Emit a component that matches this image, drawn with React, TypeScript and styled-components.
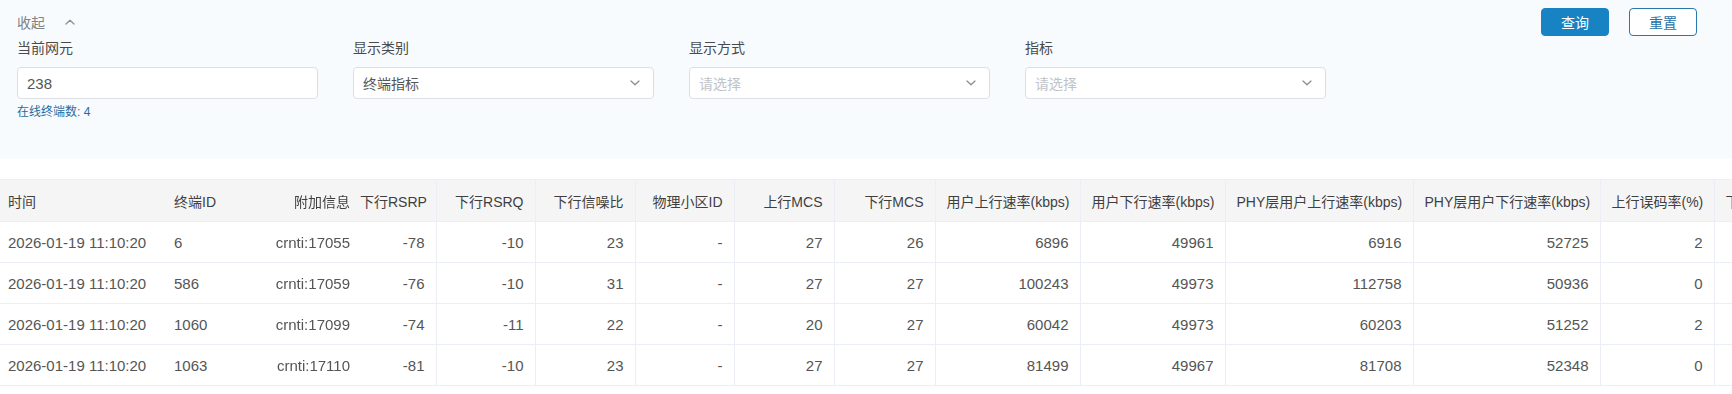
import React from "react";
import styled, { createGlobalStyle } from "styled-components";

const GlobalStyle = createGlobalStyle`
  html, body { margin: 0; padding: 0; background: #ffffff; }
  body {
    font-family: "Liberation Sans", Arial, "Noto Sans CJK SC", sans-serif;
    font-size: 14px;
    color: #555;
  }
  * { box-sizing: border-box; }
`;

const Page = styled.div`
  width: 1732px;
  height: 394px;
  overflow: hidden;
  background: #fff;
`;

const FilterPanel = styled.section`
  height: 159px;
  background: #f7fbfe;
  padding: 8px 35px 0 17px;
  display: flex;
  flex-direction: column;
`;

const TopBar = styled.div`
  height: 28px;
  display: flex;
  align-items: center;
  justify-content: space-between;
`;

const Toggle = styled.div`
  display: flex;
  align-items: center;
  gap: 20px;
  color: #828282;
  font-size: 14px;
`;

const Buttons = styled.div`
  display: flex;
  gap: 20px;
`;

const Button = styled.button<{ $primary?: boolean }>`
  width: 68px;
  height: 28px;
  border-radius: 4px;
  font-family: inherit;
  font-size: 14px;
  border: 1px solid ${(p) => (p.$primary ? "#1783c3" : "#2a78ab")};
  background: ${(p) => (p.$primary ? "#1783c3" : "#ffffff")};
  color: ${(p) => (p.$primary ? "#ffffff" : "#2a72a6")};
  padding: 0;
`;

const Fields = styled.div`
  margin-top: 2px;
  display: flex;
  gap: 35px;
`;

const Field = styled.div`
  width: 301px;
  display: flex;
  flex-direction: column;
`;

const Label = styled.div`
  line-height: 20px;
  color: #4a4a4a;
  margin-bottom: 9px;
`;

const Box = styled.div<{ $placeholder?: boolean; $latin?: boolean }>`
  height: 32px;
  border: 1px solid #dcdfe6;
  border-radius: 4px;
  background: #fff;
  padding: 0 13px 0 9px;
  display: flex;
  align-items: center;
  justify-content: space-between;
  font-size: ${(p) => (p.$latin ? "15px" : "14px")};
  color: ${(p) => (p.$placeholder ? "#bfc3c9" : "#555")};
`;

const Hint = styled.div`
  margin-top: 5px;
  line-height: 16px;
  font-size: 12px;
  color: #2a6b9c;
`;

const TableWrap = styled.div`
  margin-top: 20px;
  width: 1732px;
  overflow: hidden;
`;

const Table = styled.table`
  border-collapse: collapse;
  table-layout: fixed;
  width: 1828px;
`;

type CellProps = { $align: string; $frozen?: boolean; $edge?: boolean; $left?: number; $tight?: boolean };

const HeadCell = styled.th<CellProps>`
  height: 42px;
  padding: 0 ${(p) => (p.$tight ? "9px" : "11px")} 0
    ${(p) => (p.$frozen ? "8px" : p.$tight ? "0" : "11px")};
  background: #f5f5f5;
  color: #3f3f3f;
  font-weight: normal;
  font-size: 14px;
  text-align: ${(p) => p.$align};
  white-space: nowrap;
  overflow: hidden;
  border-top: 1px solid #ebeef5;
  border-bottom: 1px solid #ebeef5;
  border-right: ${(p) => (p.$frozen ? "none" : "1px solid #ebeef5")};
  ${(p) => (p.$frozen ? `position: sticky; left: ${p.$left}px; z-index: 2;` : "")}
  ${(p) => (p.$edge ? "box-shadow: 3px 0 5px -2px rgba(0,0,0,0.08); padding-right: 10px;" : "")}
`;

const Cell = styled.td<CellProps>`
  height: 41px;
  padding: 0 11px 0 ${(p) => (p.$frozen ? "8px" : "11px")};
  background: #fff;
  color: #555;
  font-size: 15px;
  text-align: ${(p) => p.$align};
  white-space: nowrap;
  overflow: hidden;
  border-bottom: 1px solid #ebeef5;
  border-right: ${(p) => (p.$frozen ? "none" : "1px solid #ebeef5")};
  ${(p) => (p.$frozen ? `position: sticky; left: ${p.$left}px; z-index: 2;` : "")}
  ${(p) => (p.$edge ? "box-shadow: 3px 0 5px -2px rgba(0,0,0,0.08); padding-right: 10px;" : "")}
`;

const ChevronUp = () => (
  <svg width="10" height="6" viewBox="0 0 10 6" fill="none">
    <polyline points="1,5 5,1.2 9,5" stroke="#8c8c8c" strokeWidth="1.2" strokeLinecap="round" strokeLinejoin="round" />
  </svg>
);

const ChevronDown = () => (
  <svg width="10" height="6" viewBox="0 0 10 6" fill="none">
    <polyline points="1,1 5,4.8 9,1" stroke="#8a8a8a" strokeWidth="1.2" strokeLinecap="round" strokeLinejoin="round" />
  </svg>
);

type Col = {
  title: string;
  width: number;
  align: "left" | "right";
  frozen?: boolean;
  left?: number;
  edge?: boolean;
  tight?: boolean;
};

const columns: Col[] = [
  { title: "时间", width: 166, align: "left", frozen: true, left: 0 },
  { title: "终端ID", width: 97, align: "left", frozen: true, left: 166 },
  { title: "附加信息", width: 97, align: "right", frozen: true, left: 263, edge: true },
  { title: "下行RSRP", width: 76, align: "right", tight: true },
  { title: "下行RSRQ", width: 99, align: "right" },
  { title: "下行信噪比", width: 100, align: "right" },
  { title: "物理小区ID", width: 99, align: "right" },
  { title: "上行MCS", width: 100, align: "right" },
  { title: "下行MCS", width: 101, align: "right" },
  { title: "用户上行速率(kbps)", width: 145, align: "right" },
  { title: "用户下行速率(kbps)", width: 145, align: "right" },
  { title: "PHY层用户上行速率(kbps)", width: 188, align: "right" },
  { title: "PHY层用户下行速率(kbps)", width: 187, align: "right" },
  { title: "上行误码率(%)", width: 114, align: "right" },
  { title: "下行误码率(%)", width: 114, align: "right" },
];

const rows: string[][] = [
  ["2026-01-19 11:10:20", "6", "crnti:17055", "-78", "-10", "23", "-", "27", "26", "6896", "49961", "6916", "52725", "2", ""],
  ["2026-01-19 11:10:20", "586", "crnti:17059", "-76", "-10", "31", "-", "27", "27", "100243", "49973", "112758", "50936", "0", ""],
  ["2026-01-19 11:10:20", "1060", "crnti:17099", "-74", "-11", "22", "-", "20", "27", "60042", "49973", "60203", "51252", "2", ""],
  ["2026-01-19 11:10:20", "1063", "crnti:17110", "-81", "-10", "23", "-", "27", "27", "81499", "49967", "81708", "52348", "0", ""],
];

const fields = [
  { label: "当前网元", value: "238", select: false },
  { label: "显示类别", value: "终端指标", select: true },
  { label: "显示方式", value: "", select: true },
  { label: "指标", value: "", select: true },
];

export default function App() {
  return (
    <Page>
      <GlobalStyle />
      <FilterPanel>
        <TopBar>
          <Toggle>
            <span>收起</span>
            <ChevronUp />
          </Toggle>
          <Buttons>
            <Button $primary>查询</Button>
            <Button>重置</Button>
          </Buttons>
        </TopBar>
        <Fields>
          {fields.map((f) => (
            <Field key={f.label}>
              <Label>{f.label}</Label>
              <Box $placeholder={!f.value} $latin={!f.select}>
                <span>{f.value || "请选择"}</span>
                {f.select && <ChevronDown />}
              </Box>
              {!f.select && <Hint>在线终端数: 4</Hint>}
            </Field>
          ))}
        </Fields>
      </FilterPanel>
      <TableWrap>
        <Table>
          <colgroup>
            {columns.map((c) => (
              <col key={c.title} style={{ width: c.width }} />
            ))}
          </colgroup>
          <thead>
            <tr>
              {columns.map((c) => (
                <HeadCell
                  key={c.title}
                  $align={c.align}
                  $frozen={c.frozen}
                  $left={c.left}
                  $edge={c.edge}
                  $tight={c.tight}
                >
                  {c.title}
                </HeadCell>
              ))}
            </tr>
          </thead>
          <tbody>
            {rows.map((r, i) => (
              <tr key={i}>
                {r.map((v, j) => {
                  const c = columns[j];
                  return (
                    <Cell key={j} $align={c.align} $frozen={c.frozen} $left={c.left} $edge={c.edge}>
                      {v}
                    </Cell>
                  );
                })}
              </tr>
            ))}
          </tbody>
        </Table>
      </TableWrap>
    </Page>
  );
}
